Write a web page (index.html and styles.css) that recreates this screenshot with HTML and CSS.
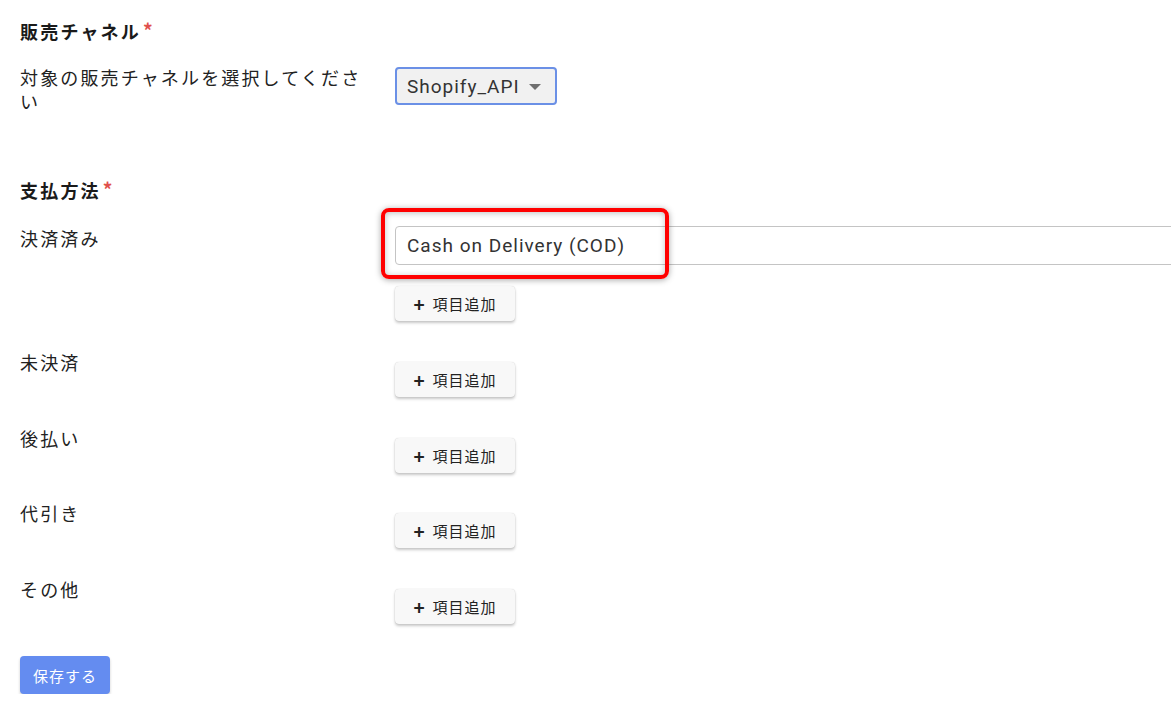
FILE: index.html
```html
<!DOCTYPE html>
<html lang="ja">
<head>
<meta charset="utf-8">
<link rel="stylesheet" href="styles.css">
</head>
<body>
<main class="page">
  <section class="section">
    <h2 class="heading">販売チャネル<span class="req">*</span></h2>
    <div class="row">
      <div class="label">対象の販売チャネルを選択してください</div>
      <div class="control">
        <div class="select">
          <span class="select-text">Shopify_API</span>
          <span class="caret"></span>
        </div>
      </div>
    </div>
  </section>

  <section class="section section-pay">
    <h2 class="heading">支払方法<span class="req">*</span></h2>
    <div class="rows">
      <div class="row">
        <div class="label">決済済み</div>
        <div class="control">
          <div class="item">
            <div class="input">Cash on Delivery (COD)</div>
            <div class="highlight"></div>
          </div>
          <button class="add"><span class="plus">+</span>項目追加</button>
        </div>
      </div>
      <div class="row">
        <div class="label">未決済</div>
        <div class="control">
          <button class="add"><span class="plus">+</span>項目追加</button>
        </div>
      </div>
      <div class="row">
        <div class="label">後払い</div>
        <div class="control">
          <button class="add"><span class="plus">+</span>項目追加</button>
        </div>
      </div>
      <div class="row">
        <div class="label">代引き</div>
        <div class="control">
          <button class="add"><span class="plus">+</span>項目追加</button>
        </div>
      </div>
      <div class="row">
        <div class="label">その他</div>
        <div class="control">
          <button class="add"><span class="plus">+</span>項目追加</button>
        </div>
      </div>
    </div>
  </section>

  <button class="save">保存する</button>
</main>
</body>
</html>
```

FILE: styles.css
```css
* { box-sizing: border-box; }
html, body { margin: 0; padding: 0; background: #fff; overflow: hidden; }
body {
  font-family: "Noto Sans CJK JP", "Noto Sans", Roboto, sans-serif;
  color: #222;
}
.page {
  padding: 18px 0 0 20px;
  display: flex;
  flex-direction: column;
  align-items: flex-start;
  width: 1400px;
}
.section { display: flex; flex-direction: column; gap: 22px; width: 100%; }
.section-pay { margin-top: 64px; gap: 24px; }
.heading {
  margin: 0;
  font-size: 18px;
  line-height: 24px;
  font-weight: 700;
  letter-spacing: 2.2px;
  color: #1a1a1a;
}
.req {
  color: #e0504c;
  font-size: 19px;
  font-weight: 700;
  margin-left: 2px;
  vertical-align: 1px;
}
.rows { display: flex; flex-direction: column; gap: 28.75px; }
.row {
  display: grid;
  grid-template-columns: 375px 1fr;
}
.label {
  font-size: 18px;
  line-height: 24px;
  letter-spacing: 2.15px;
  color: #222;
  width: 345px;
}
.control { display: flex; flex-direction: column; align-items: flex-start; }
.select {
  margin-top: 2px;
  height: 38px;
  width: 162px;
  border: 2px solid #6b90e6;
  border-radius: 4px;
  background: #f1f1f1;
  display: flex;
  align-items: center;
  padding: 0 0 0 10px;
  gap: 9px;
}
.select-text {
  font-family: Roboto, "Noto Sans", sans-serif;
  font-size: 19px;
  letter-spacing: 1px;
  color: #333;
}
.caret {
  width: 0; height: 0;
  border-left: 6px solid transparent;
  border-right: 6px solid transparent;
  border-top: 6px solid #6f6f6f;
  margin-top: 2px;
}
.item { position: relative; width: 100%; margin-bottom: 9px; }
.input {
  height: 39px;
  border: 1px solid #c4c4c4;
  border-radius: 4px;
  padding: 0 11px;
  display: flex;
  align-items: center;
  font-family: Roboto, "Noto Sans", sans-serif;
  font-size: 19px;
  letter-spacing: 1px;
  color: #333;
}
.highlight {
  position: absolute;
  left: -14px;
  top: -18px;
  width: 288px;
  height: 71px;
  border: 4px solid #ff0000;
  border-radius: 8px;
  box-shadow: 0 1px 6px rgba(0,0,0,0.35), inset 0 1px 6px rgba(0,0,0,0.25);
}
.add {
  margin-top: 12px;
  height: 35px;
  width: 120px;
  border: none;
  border-radius: 4px;
  background: #f8f8f8;
  box-shadow: 0 2px 3px rgba(0,0,0,0.22), 0 0 1px rgba(0,0,0,0.2);
  font-family: "Noto Sans CJK JP", sans-serif;
  font-size: 15px;
  letter-spacing: 1px;
  color: #222;
  display: flex;
  align-items: center;
  justify-content: center;
  padding: 0;
  cursor: pointer;
}
.plus { font-size: 19px; font-weight: 700; margin-right: 7px; line-height: 1; }
.save {
  margin-top: 32px;
  height: 38px;
  width: 90px;
  border: none;
  border-radius: 4px;
  background: #648cf0;
  color: #fff;
  font-family: "Noto Sans CJK JP", sans-serif;
  font-size: 15px;
  letter-spacing: 1px;
  box-shadow: 0 2px 3px rgba(0,0,0,0.2);
  padding: 0;
}
```
